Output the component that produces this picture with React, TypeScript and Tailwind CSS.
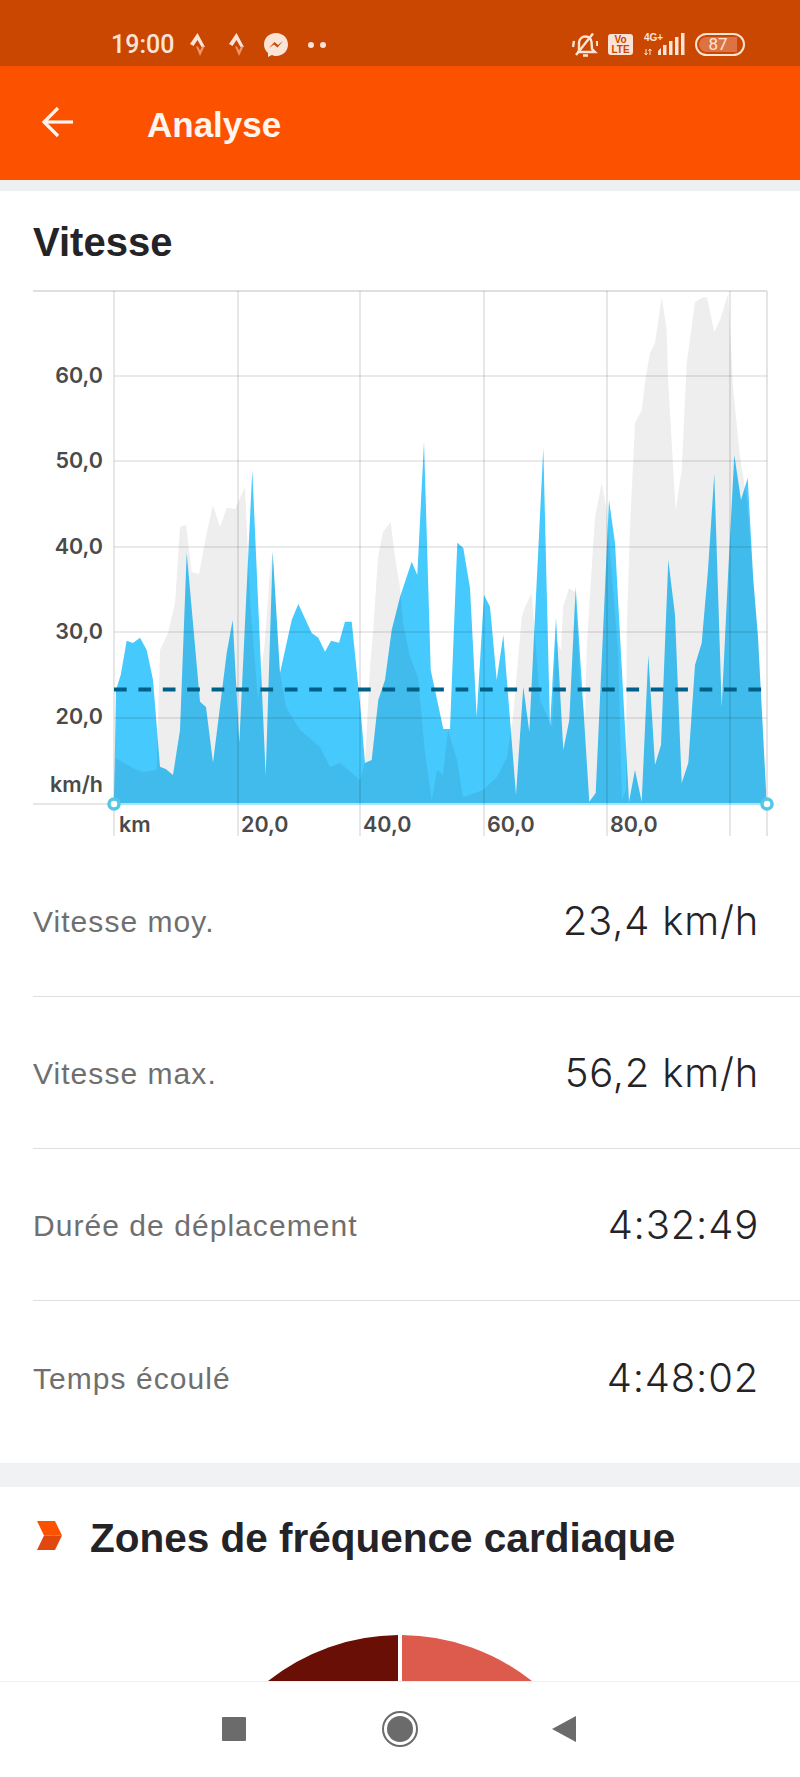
const blue = [[114,803],[116,690],[120.7,675],[126.7,640.7],[133,643],[140,637.7],[146.7,650],[153,680],[160,766.7],[165.7,769],[173,775],[180,730],[186.7,552.7],[200,701.7],[206,707],[213,762.7],[226.7,653],[232.7,620],[239.3,743],[252.3,470],[265.7,775],[272.7,551.7],[280,673],[291.7,620],[298.3,604],[311.7,633],[318.3,637.7],[325,651.7],[331,640.7],[339,642.7],[345,621.7],[351.7,621.7],[360,703],[365,763],[371.7,760],[378.3,700],[385,680],[391.7,630],[400,597],[411.7,561.7],[417.3,575],[424,441.7],[430.7,670],[443.3,729],[450,729],[457.3,542.7],[463.3,548],[470,588],[476.7,716.7],[484,595],[490,606.7],[496.7,680],[503.3,635],[516,795],[523.3,686.7],[529.3,731.7],[543.3,448],[550,726.7],[556,618],[563.3,750],[569.3,720],[575.7,587],[589.3,801.7],[595.7,793],[609,500],[615,543],[629,801.7],[635,770],[641.7,801.7],[648.3,655],[655,765],[661,745],[668.3,560],[675,615],[681.7,783],[688.3,763],[695,665],[701.7,643],[708,570],[714.3,474],[721.7,707],[728.3,570],[734.3,455],[741,500],[747.7,478],[753.3,580],[758,637],[766.7,803]];
const gray = [[114,803],[115.7,758],[133,768],[143,772],[156.7,770],[160,650],[168,633],[175,603],[180,527],[186,525],[191.7,572],[199,574],[206.7,533],[213,505],[220,527],[226.7,508],[235,509],[245,487],[250,600],[258,700],[265,640],[270,570],[272.7,552],[280,673],[286,707],[300,730],[320,747],[330,767],[340,763],[360,780],[365,763],[370,667],[373,633],[378,557],[383,532],[390.7,522],[395,557],[400,587],[403,623],[410,657],[418,677],[425,753],[431.7,800],[437,770],[443,775],[448,730],[457,760],[463,797],[475,793],[483,790],[497,777],[507,757],[513,717],[521.7,617],[525,607],[531.7,593],[540,700],[552,727],[556,640],[561,650],[563,607],[569,588],[575,592],[581,690],[585,717],[586.7,647],[593,547],[595,517],[601.7,483],[606.7,510],[618,650],[622,800],[626,790],[626.7,633],[630,527],[635,423],[641.7,410],[645.7,377],[650,353],[655,343],[661.7,297],[666.7,330],[668,377],[673.3,470],[675.7,510],[681.7,470],[686.7,363],[695,302],[701.7,298],[707,297],[714.3,332],[720,320],[728.3,293],[733,387],[740,457],[747,500],[753.3,580],[758,637],[766.7,803]];
const pts = (a: number[][]) => a.map((p) => p.join(",")).join(" ");

function Chart() {
  const vs = [114, 238, 360, 484, 607, 730];
  const hs = [376, 461, 547, 632, 718];
  const yl: [string, number][] = [["60,0", 382.7], ["50,0", 468], ["40,0", 553.7], ["30,0", 639], ["20,0", 724], ["km/h", 791.7]];
  const xl: [string, number][] = [["km", 119], ["20,0", 241], ["40,0", 363], ["60,0", 487], ["80,0", 610]];
  return (
    <svg viewBox="0 285 800 560" width="800" height="560" className="block">
      <polygon points={pts(blue)} fill="#46c9fc" />
      <polygon points={pts(gray)} fill="rgba(0,0,0,0.065)" />
      <line x1="33" y1="291" x2="767" y2="291" stroke="#e0e0e0" strokeWidth="2" />
      <line x1="33" y1="804" x2="108" y2="804" stroke="#dedede" strokeWidth="1.5" />
      <line x1="114" y1="804" x2="767" y2="804" stroke="#8fdcf8" strokeWidth="1.5" />
      {vs.map((x) => (
        <line key={x} x1={x} y1="291" x2={x} y2="836" stroke="rgba(0,0,0,0.13)" strokeWidth="1.5" />
      ))}
      <line x1="767" y1="291" x2="767" y2="836" stroke="#dcdcdc" strokeWidth="1.5" />
      {hs.map((y) => (
        <line key={y} x1="114" y1={y} x2="767" y2={y} stroke="rgba(0,0,0,0.11)" strokeWidth="1.5" />
      ))}
      <line x1="114" y1="689.5" x2="762" y2="689.5" stroke="#005f86" strokeWidth="4" strokeDasharray="12.7 11.7" />
      <circle cx="114" cy="804" r="5" fill="#fff" stroke="#52c8e6" strokeWidth="3.5" />
      <circle cx="767" cy="804" r="5" fill="#fff" stroke="#52c8e6" strokeWidth="3.5" />
      {yl.map(([t, y]) => (
        <text key={t} x="103" y={y} textAnchor="end" fontFamily="Inter, sans-serif" fontWeight="600" fontSize="21.5" fill="#4a4a4a">{t}</text>
      ))}
      {xl.map(([t, x]) => (
        <text key={t} x={x} y="831.5" fontFamily="Inter, sans-serif" fontWeight="600" fontSize="21.5" fill="#4a4a4a">{t}</text>
      ))}
    </svg>
  );
}

function StravaMark() {
  return (
    <svg width="18" height="24" viewBox="0 0 18 24" className="block">
      <path d="M7.5 0 L15 14 H11.5 L7.5 7 L3.5 13 L0 11 Z" fill="#fbe3d6" />
      <path d="M6 13.5 L10 23 L14.5 13.5 H12 L10 17.5 L8 13.5 Z" fill="#f0946a" />
    </svg>
  );
}

function Row({ label, value, last }: { label: string; value: string; last?: boolean }) {
  return (
    <div className={last ? "ml-[33px] pr-[41px] h-[152px] flex items-center justify-between" : "ml-[33px] pr-[41px] h-[152px] flex items-center justify-between border-b border-[#dfdfdf]"}>
      <span className="mt-[2px] text-[30px] tracking-[1.05px] text-[#6f6f6f] font-['Liberation_Sans',sans-serif]">{label}</span>
      <span className="mt-[1px] text-[40px] tracking-[0.8px] font-light text-[#242428] font-['Inter',sans-serif]">{value}</span>
    </div>
  );
}

export default function App() {
  return (
    <div className="w-[800px] h-[1777px] flex flex-col overflow-hidden bg-white font-['Liberation_Sans',sans-serif]">
      <div className="h-[66px] shrink-0 bg-[#c94700] flex items-start pt-[33px] pl-[111px] pr-[55px] text-[#fbe3d6]">
        <span className="text-[25px] leading-[24px] font-medium font-['Roboto',sans-serif]">19:00</span>
        <div className="ml-[16px]"><StravaMark /></div>
        <div className="ml-[21px]"><StravaMark /></div>
        <svg width="24" height="24" viewBox="0 0 24 24" className="ml-[17px] block">
          <path d="M12 0 C5 0 0 5 0 11.5 C0 15 1.5 18 4 20 V24 L7.8 22 C9 22.5 10.5 23 12 23 C19 23 24 18 24 11.5 C24 5 19 0 12 0 Z" fill="#fbe3d6" />
          <path d="M5 15 L10.5 9 L14 12 L19 8 L13.5 14.5 L10 11.5 Z" fill="#c94700" />
        </svg>
        <div className="ml-[20px] mt-[9px] flex gap-[6px]">
          <div className="w-[6px] h-[6px] rounded-full bg-[#fbe3d6]" />
          <div className="w-[6px] h-[6px] rounded-full bg-[#fbe3d6]" />
        </div>
        <svg width="26" height="25" viewBox="0 0 26 25" className="ml-auto block -translate-x-[2px]" fill="none" stroke="#fbe3d6" strokeWidth="2.4">
          <path d="M7 17 V10 C7 6 10 3.5 13.5 3.5 C17 3.5 19 6 19.5 9 L20 16 L23 19 H5" />
          <path d="M11 22.5 H16" strokeWidth="2.5" />
          <path d="M21 0.5 L4 22" />
          <path d="M2 8 L1 14 M25 8 L25.5 13" />
        </svg>
        <div className="ml-[8px] w-[25px] h-[21px] mt-[1px] rounded-[3px] bg-[#fbe3d6] flex flex-col items-center justify-center text-[#c94700] text-[10px] leading-[10px] font-bold">
          <span>Vo</span>
          <span>LTE</span>
        </div>
        <div className="ml-[11px] relative w-[43px] h-[23px]">
          <span className="absolute left-0 top-0 text-[10px] leading-[10px] font-bold">4G+</span>
          <svg width="43" height="23" viewBox="0 0 43 23" className="block">
            <path d="M2 16 V22 M0.5 20 L2 22 L3.5 20 M6 22 V16 M4.5 18 L6 16 L7.5 18" stroke="#fbe3d6" strokeWidth="1" fill="none" />
            <path d="M14 18 L17 15 V22 H14 Z" fill="#fbe3d6" />
            <rect x="19" y="12" width="3.5" height="10" fill="#fbe3d6" />
            <rect x="25" y="8" width="3.5" height="14" fill="#fbe3d6" />
            <rect x="31" y="4" width="3.5" height="18" fill="#fbe3d6" />
            <rect x="37" y="0" width="3.5" height="22" fill="#fbe3d6" />
          </svg>
        </div>
        <div className="ml-[8px] w-[50px] h-[23px] rounded-full border-2 border-[#fbe3d6] p-[2px]">
          <div className="w-[38px] h-full rounded-l-full rounded-r-[4px] bg-[#dd7344] flex items-center justify-center text-[17px] leading-none font-['Roboto',sans-serif]">87</div>
        </div>
      </div>

      <div className="h-[114px] shrink-0 bg-[#fc5200] flex items-center pl-[41px]">
        <svg width="33" height="32" viewBox="0 0 33 32" fill="none" stroke="#fff5ee" strokeWidth="3.2" className="block -mt-[2px]">
          <path d="M32 16 H3" />
          <path d="M17 2 L3 16 L17 30" />
        </svg>
        <span className="ml-[73px] mt-[4px] text-[35px] font-bold text-[#fff5ee]">Analyse</span>
      </div>
      <div className="h-[11px] shrink-0 bg-[#eeeff0]" />

      <div className="flex-1 overflow-hidden">
        <h1 className="ml-[33px] h-[94px] pt-[8px] flex items-center text-[40px] font-bold text-[#242428]">Vitesse</h1>
        <Chart />
        <Row label="Vitesse moy." value="23,4 km/h" />
        <Row label="Vitesse max." value="56,2 km/h" />
        <Row label="Durée de déplacement" value="4:32:49" />
        <Row label="Temps écoulé" value="4:48:02" last />
        <div className="h-[10px]" />
        <div className="h-[24px] bg-[#f1f2f3]" />
        <div className="h-[148px] pl-[37px] pt-[34px] flex items-start">
          <svg width="25" height="29" viewBox="0 0 25 29" className="block shrink-0">
            <path d="M0 0 H18 L25 14.5 H7 Z" fill="#fc5200" />
            <path d="M7 14.5 H25 L18 29 H0 Z" fill="#e0480f" />
          </svg>
          <h2 className="ml-[28px] -mt-[6px] text-[40.5px] leading-[46px] font-bold text-[#242428] whitespace-nowrap">Zones de fréquence cardiaque</h2>
        </div>
        <svg width="800" height="46" viewBox="0 0 800 46" className="block">
          <path d="M268 46 A212 212 0 0 1 398 0 V46 Z" fill="#6a0f06" />
          <path d="M402 0 A212 212 0 0 1 532 46 H402 Z" fill="#dd5b4d" />
        </svg>
      </div>

      <div className="h-[96px] shrink-0 bg-white border-t border-[#efefef] flex items-center pb-[1px]">
        <div className="ml-[222px] w-[24px] h-[24px] bg-[#6b6b6b] rounded-[1px]" />
        <div className="ml-[136px] w-[36px] h-[36px] rounded-full border-2 border-[#6b6b6b] p-[3px]">
          <div className="w-full h-full rounded-full bg-[#6b6b6b]" />
        </div>
        <svg width="24" height="26" viewBox="0 0 24 26" className="ml-[134px] block">
          <path d="M24 0 V26 L0 13 Z" fill="#6b6b6b" />
        </svg>
      </div>
    </div>
  );
}
